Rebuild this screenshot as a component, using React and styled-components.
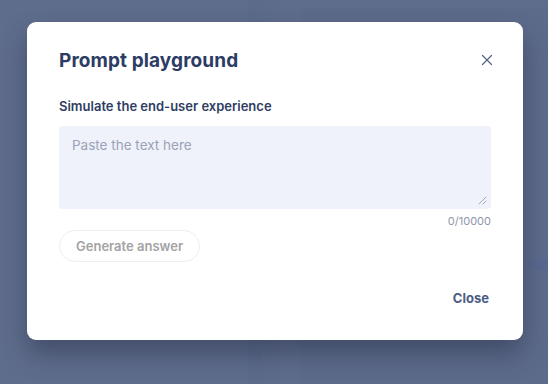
import React from 'react';
import styled, { createGlobalStyle } from 'styled-components';

const GlobalStyle = createGlobalStyle`
  html, body {
    margin: 0;
    padding: 0;
    background: #5f6d8c;
  }
  * {
    box-sizing: border-box;
  }
`;

const Page = styled.div`
  position: relative;
  width: 548px;
  height: 384px;
  overflow: hidden;
  background: #5f6d8c;
  font-family: Inter, 'Noto Sans', sans-serif;
`;

const Backdrop = styled.div`
  display: flex;
  height: 100%;
`;

const SideArea = styled.div`
  width: 248px;
  background: #5f6d8c;
`;

const Divider = styled.div`
  width: ${(p) => p.$width}px;
  background: ${(p) => p.$color};
`;

const MainArea = styled.div`
  flex: 1;
  padding: 7px 0 0 22px;
  display: flex;
  flex-direction: column;
`;

const Panel = styled.div`
  flex: 1;
  background: #5d6b8b;
  border-radius: 6px 0 0 0;
  display: flex;
  flex-direction: column;
  justify-content: flex-end;
  padding-bottom: 114px;
  align-items: flex-end;
`;

const FaintPill = styled.div`
  width: 20px;
  height: 11px;
  border-radius: 6px 0 0 6px;
  background: #5a6890;
`;

const Overlay = styled.div`
  position: absolute;
  inset: 0;
  display: flex;
  justify-content: center;
  align-items: flex-start;
  padding: 22px 0 0 2px;
`;

const Modal = styled.div`
  width: 496px;
  height: 318px;
  background: #ffffff;
  border-radius: 9px;
  box-shadow: 0 14px 26px rgba(30, 40, 65, 0.45);
  padding: 26px 32px 0 32px;
  display: flex;
  flex-direction: column;
`;

const Header = styled.div`
  display: flex;
  justify-content: space-between;
  align-items: center;
  height: 24px;
`;

const Title = styled.h2`
  margin: 0;
  font-size: 19px;
  font-weight: 700;
  color: #2c3c64;
  letter-spacing: 0.1px;
`;

const CloseIcon = styled.button`
  border: none;
  background: none;
  padding: 0;
  width: 12px;
  height: 12px;
  margin-right: -2px;
  display: flex;
  cursor: pointer;
`;

const Label = styled.div`
  margin-top: 26px;
  font-size: 13px;
  font-weight: 600;
  color: #2f3d63;
`;

const TextArea = styled.div`
  position: relative;
  margin-top: 12px;
  height: 83px;
  background: #eff2fa;
  border-radius: 4px;
  padding: 11px 13px;
  font-size: 13.5px;
  color: #9ba3b8;
`;

const Grip = styled.svg`
  position: absolute;
  right: 4px;
  bottom: 4px;
`;

const Counter = styled.div`
  margin-top: 5px;
  text-align: right;
  font-size: 11px;
  color: #8d96aa;
`;

const GhostButton = styled.button`
  align-self: flex-start;
  margin-top: 2px;
  height: 32px;
  padding: 0 16px;
  border: 1px solid #eceef2;
  border-radius: 16px;
  background: #ffffff;
  font-family: inherit;
  font-size: 13px;
  font-weight: 600;
  color: #a3a3a3;
`;

const Footer = styled.div`
  margin-top: 28px;
  display: flex;
  justify-content: flex-end;
`;

const TextButton = styled.button`
  border: none;
  background: none;
  padding: 0;
  margin-right: 2px;
  font-family: inherit;
  font-size: 13px;
  font-weight: 700;
  color: #4d5c84;
`;

const App = () => {
  return (
    <Page>
      <GlobalStyle />
      <Backdrop>
        <SideArea />
        <Divider $width={14} $color="#5c6b8c" />
        <Divider $width={16} $color="#5e6c8b" />
        <MainArea>
          <Panel>
            <FaintPill />
          </Panel>
        </MainArea>
      </Backdrop>
      <Overlay>
        <Modal>
          <Header>
            <Title>Prompt playground</Title>
            <CloseIcon aria-label="Close">
              <svg width="12" height="12" viewBox="0 0 12 12">
                <path d="M1.5 1.5L10.5 10.5M10.5 1.5L1.5 10.5" stroke="#56658a" strokeWidth="1.3" strokeLinecap="round" />
              </svg>
            </CloseIcon>
          </Header>
          <Label>Simulate the end-user experience</Label>
          <TextArea>
            Paste the text here
            <Grip width="9" height="9" viewBox="0 0 9 9">
              <path d="M8 1L1 8M8 5L5 8" stroke="#a3aabb" strokeWidth="1" strokeLinecap="round" />
            </Grip>
          </TextArea>
          <Counter>0/10000</Counter>
          <GhostButton>Generate answer</GhostButton>
          <Footer>
            <TextButton>Close</TextButton>
          </Footer>
        </Modal>
      </Overlay>
    </Page>
  );
};

export default App;
